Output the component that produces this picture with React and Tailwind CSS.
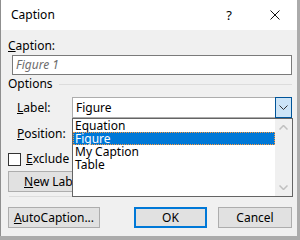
export default function App() {
  const font = { fontFamily: '"Segoe UI", "Noto Sans", sans-serif' };
  return (
    <div className="w-[300px] h-[240px] bg-[#ababab] overflow-hidden text-[12px] text-black" style={font}>
      <div className="w-[297px] h-[236px] bg-[#f0f0f0] border-l border-[#8f8f8f] flex flex-col relative">
        {/* Title bar */}
        <div className="h-[30px] bg-white flex items-center pl-[10px] shrink-0">
          <span className="leading-[16px]">Caption</span>
          <span className="ml-auto mr-[38px] leading-[16px] text-[13px]">?</span>
          <svg width="10" height="10" viewBox="0 0 10 10" className="mr-[17px]">
            <path d="M0.5 0.5 L9.5 9.5 M9.5 0.5 L0.5 9.5" stroke="#111" strokeWidth="1" />
          </svg>
        </div>
        {/* Body */}
        <div className="flex flex-col pl-[7px] pr-[5px] flex-1">
          <div className="mt-[8px] leading-[16px]"><span className="underline">C</span>aption:</div>
          <div className="mt-[1px] ml-[4px] h-[20px] border border-[#7a7a7a] bg-white flex items-center pl-[3px] italic text-[#6d6d6d]">Figure 1</div>
          <div className="mt-[1px] flex items-center leading-[16px]">
            <span>Options</span>
            <div className="flex-1 h-px bg-[#dcdcdc] ml-[6px]" />
          </div>
          <div className="mt-[5px] flex items-center h-[21px]">
            <span className="ml-[9px] w-[55px]"><span className="underline">L</span>abel:</span>
            <div className="flex-1 h-[21px] border border-[#adadad] bg-white flex items-center pl-[3px] relative">
              <span>Figure</span>
              <div className="absolute right-[-1px] top-[-1px] w-[17px] h-[21px] bg-[#cce4f7] border border-[#005499] flex items-center justify-center">
                <svg width="9" height="5" viewBox="0 0 9 5"><path d="M0.5 0.5 L4.5 4.5 L8.5 0.5" stroke="#333" fill="none" strokeWidth="1" /></svg>
              </div>
            </div>
          </div>
          <div className="mt-[5px] flex items-center h-[21px]">
            <span className="ml-[9px] w-[55px]"><span className="underline">P</span>osition:</span>
            <div className="flex-1 h-[21px] border border-[#adadad] bg-[#e5e5e5] flex items-center pl-[3px]">Below selected item</div>
          </div>
          <div className="mt-[8px] flex items-center h-[14px]">
            <div className="w-[13px] h-[13px] border border-[#333] bg-white" />
            <span className="ml-[5px] leading-[14px]"><span className="underline">E</span>xclude label from caption</span>
          </div>
          <div className="mt-[5px] flex gap-[8px]">
            <div className="w-[92px] h-[21px] bg-[#e1e1e1] border border-[#adadad] flex items-center pl-[15px]"><span><span className="underline">N</span>ew Label...</span></div>
            <div className="w-[92px] h-[21px] bg-[#e1e1e1] border border-[#adadad] flex items-center justify-center">Delete Label</div>
            <div className="w-[92px] h-[21px] bg-[#e1e1e1] border border-[#adadad] flex items-center justify-center">Numbering...</div>
          </div>
          <div className="mt-[4px] h-px bg-[#dcdcdc] ml-px" />
          <div className="mt-[10px] flex items-center">
            <div className="w-[92px] h-[21px] bg-[#e1e1e1] border border-[#adadad] flex items-center justify-center"><span><span className="underline">A</span>utoCaption...</span></div>
            <div className="ml-auto w-[73px] h-[21px] bg-[#e1e1e1] border-2 border-[#0078d7] flex items-center justify-center">OK</div>
            <div className="ml-[11px] w-[74px] h-[21px] bg-[#e1e1e1] border border-[#adadad] flex items-center justify-center">Cancel</div>
          </div>
        </div>
        {/* Dropdown list */}
        <div className="absolute left-[71px] top-[118px] w-[221px] h-[79px] bg-white border border-[#646464] flex">
          <div className="flex-1 flex flex-col">
            <div className="h-[13px] leading-[13px] pl-[2px]">Equation</div>
            <div className="h-[13px] leading-[11px] pl-[1px] bg-[#0078d7] text-white border border-dotted border-[#ff9a3c]">Figure</div>
            <div className="h-[13px] leading-[13px] pl-[2px]">My Caption</div>
            <div className="h-[13px] leading-[13px] pl-[2px]">Table</div>
          </div>
          <div className="w-[17px] bg-[#f0f0f0] flex flex-col items-center justify-between py-[6px]">
            <svg width="9" height="5" viewBox="0 0 9 5"><path d="M0.5 4.5 L4.5 0.5 L8.5 4.5" stroke="#c0c0c0" fill="none" strokeWidth="1.5" /></svg>
            <svg width="9" height="5" viewBox="0 0 9 5"><path d="M0.5 0.5 L4.5 4.5 L8.5 0.5" stroke="#c0c0c0" fill="none" strokeWidth="1.5" /></svg>
          </div>
        </div>
      </div>
    </div>
  );
}
